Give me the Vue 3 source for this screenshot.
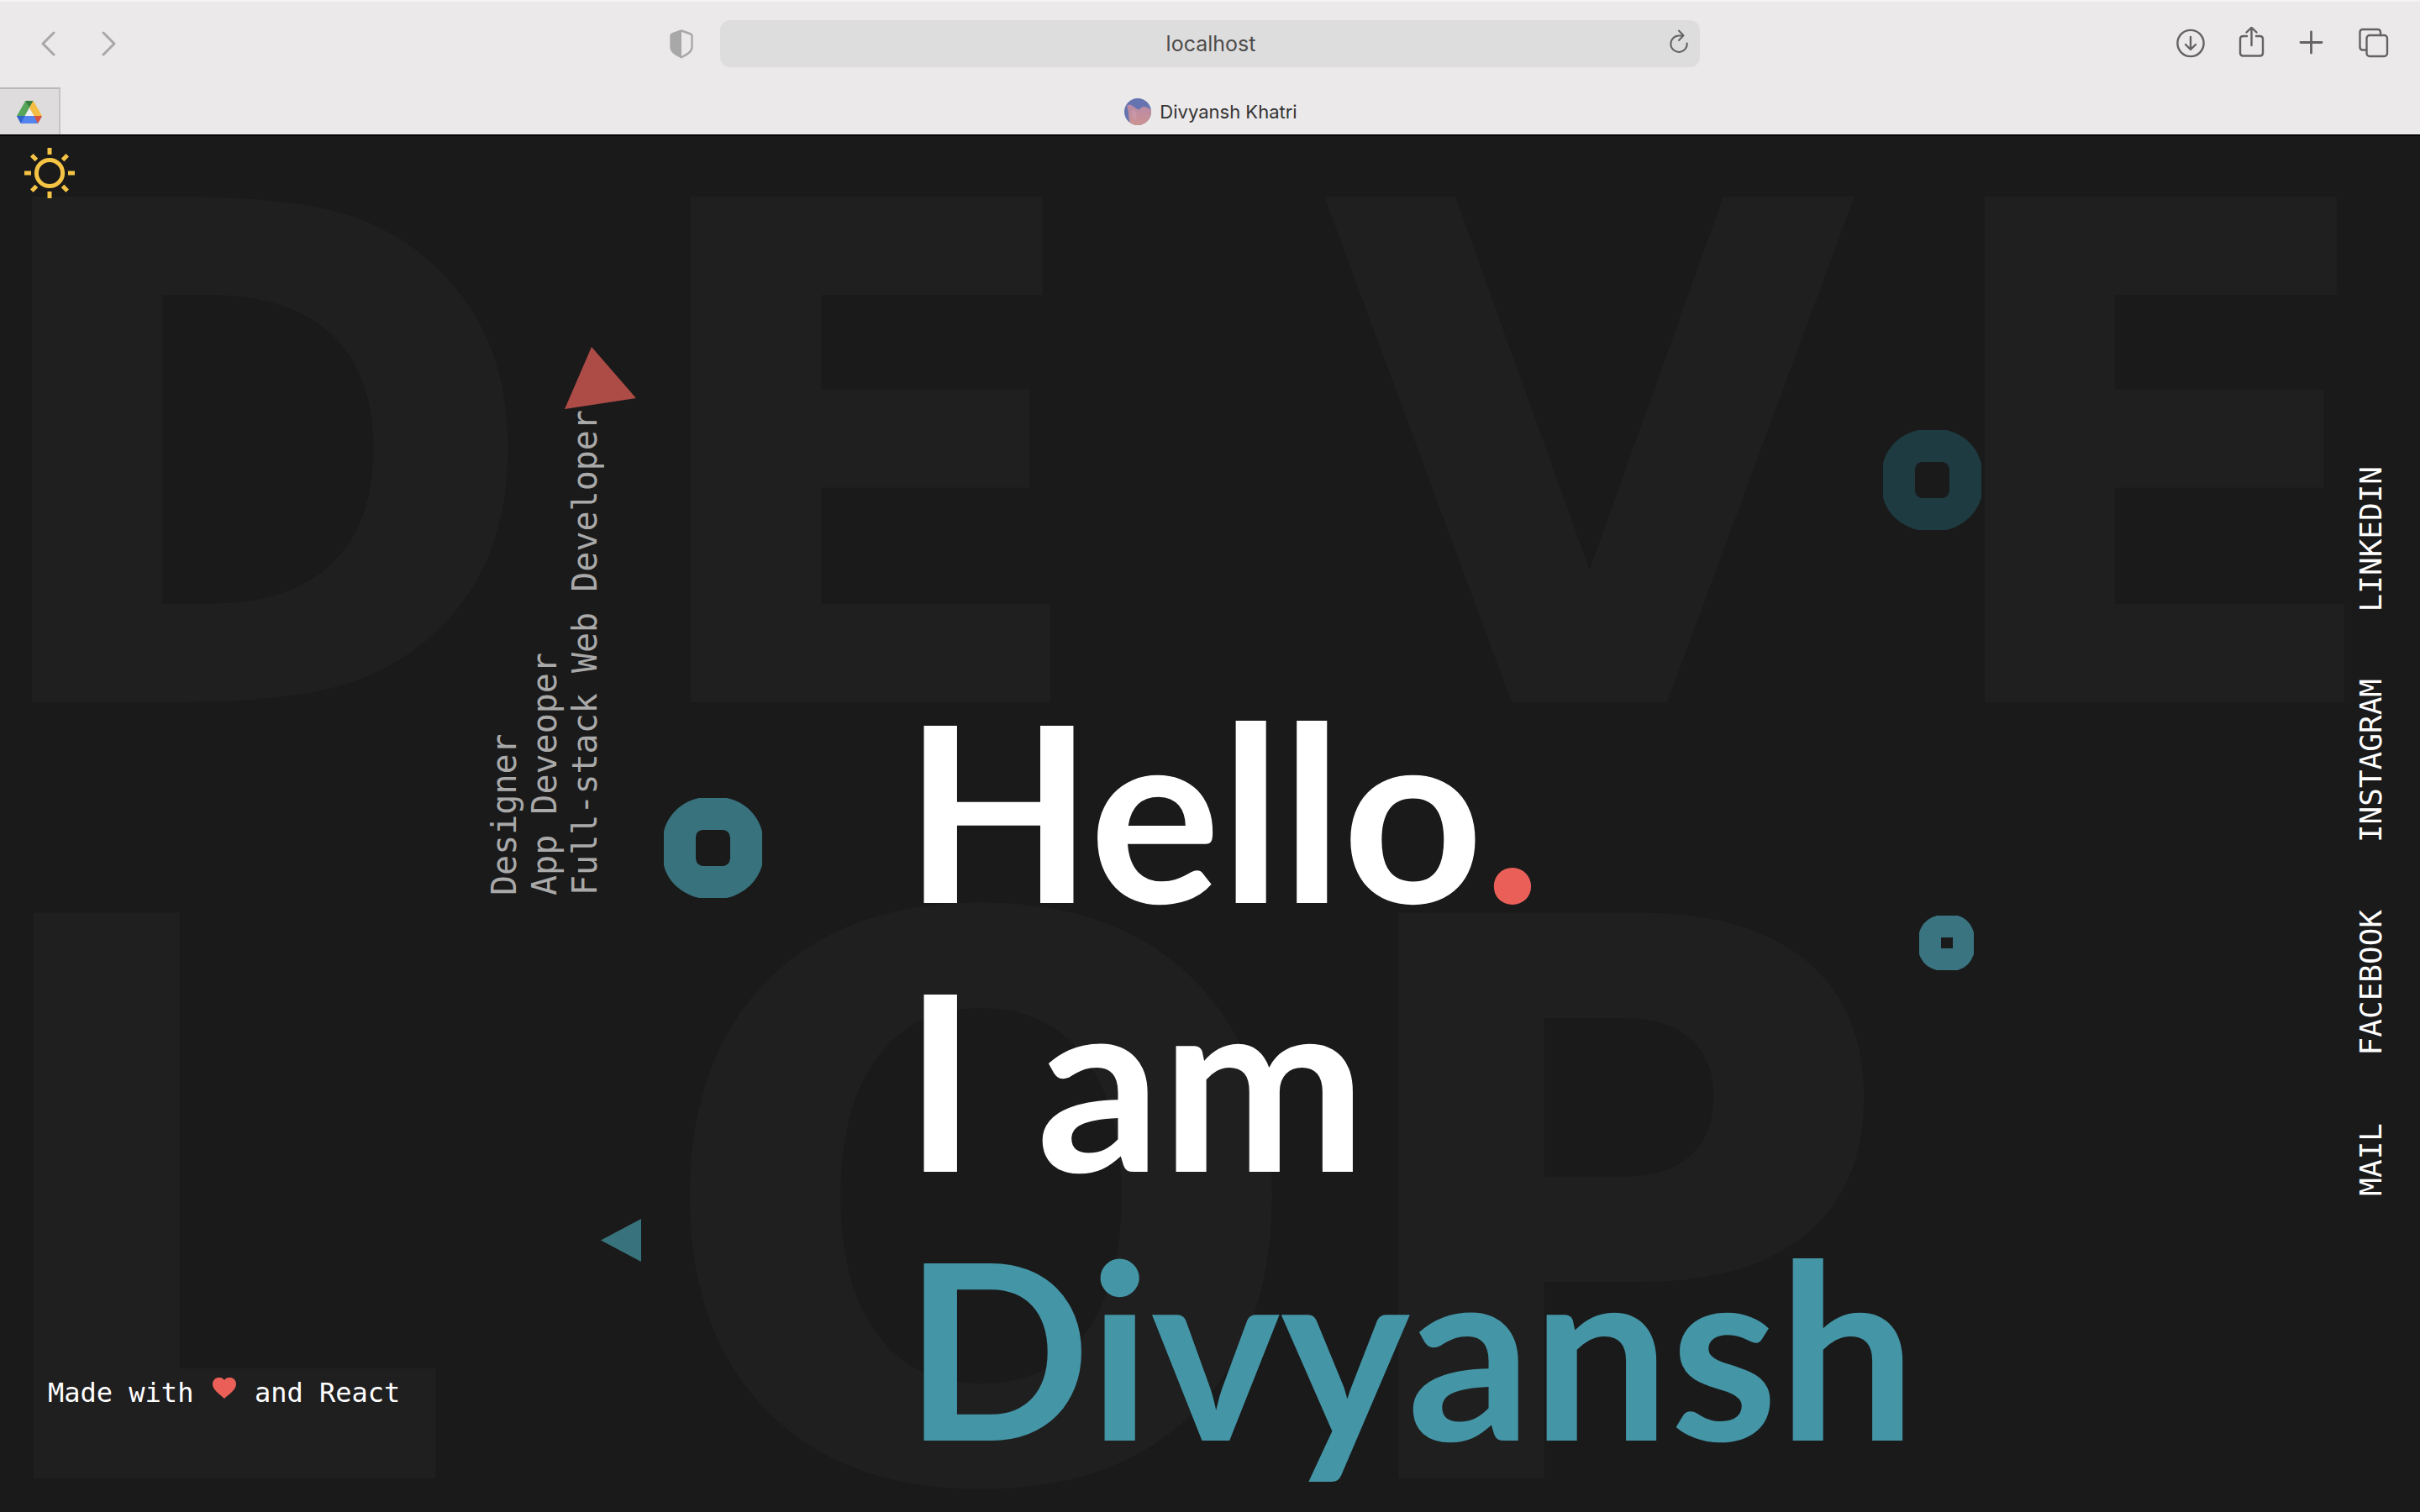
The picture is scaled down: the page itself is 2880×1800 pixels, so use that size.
<script setup>
import { ref } from 'vue'

const address = ref('localhost')
const backdrop = [
  { name: 'top', letters: ['D', 'E', 'V', 'E'] },
  { name: 'bottom', letters: ['L', 'O', 'P'] },
]
const roles = ['Designer', 'App Deveoper', 'Full-stack Web Developer']
const links = ['LINKEDIN', 'INSTAGRAM', 'FACEBOOK', 'MAIL']
const rays = [0, 45, 90, 135, 180, 225, 270, 315]
</script>

<template>
  <div class="window">
    <header class="browser">
      <div class="toolbar">
        <div class="side">
          <button class="tool faint" aria-label="Back">
            <svg viewBox="0 0 40 40"><path d="M28 7 15 20 28 33" stroke-width="3" /></svg>
          </button>
          <button class="tool faint" aria-label="Forward">
            <svg viewBox="0 0 40 40"><path d="M15 7 28 20 15 33" stroke-width="3" /></svg>
          </button>
          <button class="tool faint shield" aria-label="Privacy report">
            <svg viewBox="0 0 40 40">
              <path d="M20 4.500 31 8.500Q32.500 9 32.500 11V24C32.500 30 26 33 20 36.200 14 33 7.500 30 7.500 24V11Q7.500 9 9 8.500Z" stroke-width="2.400" />
              <path d="M20 4.500V36C14 33 7.500 30 7.500 24V10L9 8.500Z" fill="currentColor" stroke="none" />
            </svg>
          </button>
        </div>
        <div class="field">
          <input v-model="address" type="text" aria-label="Address" />
          <button class="tool reload" aria-label="Reload">
            <svg viewBox="0 0 40 40">
              <path d="M28.700 19.500A9.700 9.700 0 1 1 19 10.500H24M19 4.500 24.500 10.300 19 16" stroke-width="2" />
            </svg>
          </button>
        </div>
        <div class="side end">
          <button class="tool" aria-label="Downloads">
            <svg viewBox="0 0 40 40">
              <circle cx="19" cy="19.500" r="15.600" />
              <path d="M19 12V26.500M13 21 19 27 25 21" />
            </svg>
          </button>
          <button class="tool" aria-label="Share">
            <svg viewBox="0 0 40 40">
              <path d="M14 11H9.500Q6 11 6 14.500V31Q6 34.500 9.500 34.500H29.500Q33 34.500 33 31V14.500Q33 11 29.500 11H25M19.500 22V1.500M13.500 6.500 19.500 .8 25.500 6.500" />
            </svg>
          </button>
          <button class="tool" aria-label="New tab">
            <svg viewBox="0 0 40 40"><path d="M6 18.500H31M18.500 6V31" stroke-width="2.800" /></svg>
          </button>
          <button class="tool" aria-label="Tab overview">
            <svg viewBox="0 0 40 40">
              <rect x="12.500" y="10" width="24.500" height="25" rx="3.500" />
              <path d="M12 27.500H8Q4.500 27.500 4.500 24V6.500Q4.500 3 8 3H25.500Q29 3 29 6.500V10" />
            </svg>
          </button>
        </div>
      </div>
      <div class="tabs">
        <button class="pinned" aria-label="Google Drive">
          <svg viewBox="0 0 30 27">
            <path d="M10.300 0H19.300L4.800 27 0 18Z" fill="#57a55a" />
            <path d="M10.300 0H19.700L15 8Z" fill="#397d3d" />
            <path d="M19.700 0 30 18H20.500L15 8Z" fill="#f2bd42" />
            <path d="M0 18H30L25 27H5Z" fill="#5383ec" />
            <path d="M0 18H9.500L4.800 27Z" fill="#3263cd" />
            <path d="M20.500 18H30L25 27Z" fill="#d9503f" />
            <path d="M15 9 20.300 18H9.700Z" fill="#f0f0f0" />
          </svg>
        </button>
        <div class="active">
          <svg viewBox="0 0 32 32">
            <defs>
              <clipPath id="disc"><circle cx="16" cy="16" r="16" /></clipPath>
              <linearGradient id="cloud" x1="0" y1="0" x2="0" y2="1">
                <stop offset="0" stop-color="#b88aa8" />
                <stop offset="1" stop-color="#cc9391" />
              </linearGradient>
            </defs>
            <g clip-path="url(#disc)">
              <rect width="32" height="32" fill="#6574b0" />
              <path d="M3 9Q6 6 10 9L14 12Q18 15 20 11Q25 8 32 14V32H7Q5 22 5 16Z" fill="url(#cloud)" />
              <path d="M9 14Q13 12 15 20L13 27Q8 22 9 14Z" fill="#cf9dae" opacity="0.6" />
            </g>
          </svg>
          <span>Divyansh Khatri</span>
        </div>
      </div>
    </header>

    <main class="page">
      <div class="backdrop" aria-hidden="true">
        <div v-for="row in backdrop" :key="row.name" :class="['row', row.name]">
          <span v-for="(letter, i) in row.letters" :key="i">{{ letter }}</span>
        </div>
      </div>

      <div class="shapes" aria-hidden="true">
        <svg class="shape red-triangle" viewBox="0 0 85 74"><path d="M32 0 85 61 0 74Z" fill="#ad4b47" /></svg>
        <svg class="shape ring ring-left" viewBox="0 0 117 119"><path fill-rule="evenodd" d="M42 0H75C97 4 113 22 117 40V80C112 98 97 114 75 119H42C20 114 4 98 0 80V40C4 22 20 4 42 0ZM46 38Q38 39 38 47V72Q39 80 46 81H71Q78 80 79 72V47Q78 39 71 38Z" /></svg>
        <svg class="shape ring ring-right" viewBox="0 0 117 119"><path fill-rule="evenodd" d="M42 0H75C97 4 113 22 117 40V80C112 98 97 114 75 119H42C20 114 4 98 0 80V40C4 22 20 4 42 0ZM46 38Q38 39 38 47V72Q39 80 46 81H71Q78 80 79 72V47Q78 39 71 38Z" /></svg>
        <svg class="shape ring ring-small" viewBox="0 0 65 65"><path fill-rule="evenodd" d="M21 0H46Q60 4 65 20V46Q60 61 46 65H21Q5 61 0 46V20Q5 4 21 0ZM26 26V39H40V26Z" /></svg>
        <svg class="shape teal-triangle" viewBox="0 0 48 51"><path d="M0 25.500 48 0V51Z" fill="#38727d" /></svg>
      </div>

      <div class="left">
        <button class="theme" aria-label="Toggle theme">
          <svg viewBox="0 0 60 60">
            <circle cx="30" cy="30" r="15.600" />
            <path v-for="angle in rays" :key="angle" d="M30 0V8" :transform="`rotate(${angle} 30 30)`" />
          </svg>
        </button>
        <p class="credit">
          Made with
          <svg viewBox="0 0 28 25" role="img" aria-label="love"><path d="M14 25C9 20 0 15 0 7.500 0 0 10-3 14 3 18-3 28 0 28 7.500 28 15 19 20 14 25Z" /></svg>
          and React
        </p>
      </div>

      <div class="roles">
        <div v-for="role in roles" :key="role">{{ role }}</div>
      </div>

      <h1 class="greeting">
        <span>Hello<span class="dot">.</span></span>
        <span>I am</span>
        <span class="name">Divyansh</span>
      </h1>

      <nav class="social" aria-label="Contact">
        <a v-for="link in links" :key="link" href="#">{{ link }}</a>
      </nav>
    </main>
  </div>
</template>

<style>
body {
  margin: 0;
  background: #1a1a1a;
}
</style>

<style scoped>
* {
  box-sizing: border-box;
}
.window {
  display: flex;
  flex-direction: column;
  min-height: 100vh;
}
svg {
  display: block;
}
button {
  padding: 0;
  border: 0;
  background: none;
  cursor: pointer;
}
.browser {
  height: 162px;
  border-top: 2px solid #f5f3f4;
  border-bottom: 2px solid #050505;
  background: #ebe9ea;
  font-family: Inter, Roboto, sans-serif;
}
.toolbar {
  display: grid;
  grid-template-columns: 1fr minmax(0, 1166px) 1fr;
  align-items: center;
  height: 102px;
  padding: 0 36px 2px;
}
.side {
  display: flex;
  align-items: center;
  gap: 32px;
}
.side.end {
  justify-content: flex-end;
}
.tool {
  width: 40px;
  height: 40px;
  color: #646263;
}
.tool.faint {
  color: #a9a8a8;
}
.tool svg {
  width: 40px;
  height: 40px;
  fill: none;
  stroke: currentColor;
  stroke-width: 2.4;
  stroke-linecap: round;
  stroke-linejoin: round;
}
.shield {
  margin-left: auto;
  margin-right: 26px;
}
.field {
  display: flex;
  align-items: center;
  height: 56px;
  padding: 0 4px 0 46px;
  border-radius: 12px;
  background: #dedddd;
}
.field input {
  flex: 1;
  min-width: 0;
  height: 56px;
  padding: 0;
  border: 0;
  outline: 0;
  background: none;
  color: #4d4c4c;
  font: 25px Inter, Roboto, sans-serif;
  text-align: center;
}
.tabs {
  display: flex;
  height: 56px;
}
.pinned {
  display: grid;
  place-items: center;
  width: 72px;
  border-top: 2px solid #bab9b9;
  border-right: 2px solid #c6c4c5;
  background: #dedcdd;
}
.pinned svg {
  width: 30px;
  height: 27px;
}
.active {
  display: flex;
  flex: 1;
  align-items: center;
  justify-content: center;
  gap: 10px;
  padding: 2px 70px 0 0;
  color: #333;
  font-size: 22px;
}
.active svg {
  width: 32px;
  height: 32px;
}
.page {
  position: relative;
  display: flex;
  flex: 1;
  align-items: flex-start;
  overflow: hidden;
  background: #1a1a1a;
  color: #fff;
  font-family: "DejaVu Sans Mono", monospace;
}
.backdrop {
  position: absolute;
  top: 68px;
  left: 0;
  right: 0;
  color: #1f1f1f;
  font-family: "DejaVu Sans", sans-serif;
  font-weight: 700;
  user-select: none;
}
.row {
  display: grid;
}
.top {
  grid-template-columns: 784fr 751fr 789fr 594fr;
  margin-left: -38px;
  font-size: 826px;
  line-height: 640px;
}
.bottom {
  grid-template-columns: 801fr 823fr 1301fr;
  margin-top: 210px;
  margin-left: -45px;
  font-size: 924px;
  line-height: 720px;
}
.top span:nth-child(3),
.bottom span:nth-child(2) {
  justify-self: center;
}
.shape {
  position: absolute;
}
.ring {
  width: 117px;
  height: 119px;
  fill: #38727d;
}
.red-triangle {
  top: 251px;
  left: 672px;
  width: 85px;
  height: 74px;
}
.ring-left {
  top: 788px;
  left: 790px;
}
.ring-right {
  top: 350px;
  right: 522px;
  fill: #1e3b41;
}
.ring-small {
  top: 928px;
  right: 531px;
  width: 65px;
  height: 65px;
  fill: #3a7480;
}
.teal-triangle {
  top: 1289px;
  left: 715px;
  width: 48px;
  height: 51px;
}
.left,
.roles,
.greeting,
.social {
  position: relative;
}
.left {
  display: flex;
  flex-direction: column;
  align-items: flex-start;
  align-self: stretch;
  justify-content: space-between;
  width: 20%;
  padding: 14px 0 118px 29px;
}
.theme,
.theme svg {
  width: 60px;
  height: 60px;
}
.theme svg {
  fill: none;
  stroke: #f5c445;
  stroke-width: 5;
}
.credit {
  margin: 0 0 0 28px;
  font-size: 32px;
  line-height: 48px;
  white-space: nowrap;
}
.credit svg {
  display: inline-block;
  width: 28px;
  height: 25px;
  margin: 0 3px;
  vertical-align: 4px;
  fill: #eb5f59;
}
.roles {
  margin-top: 326px;
  color: #a9a9a9;
  font-size: 40px;
  line-height: 48px;
  white-space: nowrap;
  writing-mode: vertical-rl;
  transform: rotate(180deg);
}
.greeting {
  flex: 1;
  display: flex;
  flex-direction: column;
  margin: 640px 0 0 356px;
  font-family: Lato, sans-serif;
  font-size: 292px;
  font-weight: 700;
  line-height: 320px;
  white-space: nowrap;
}
.dot {
  color: #eb5f59;
}
.name {
  color: #4495a6;
}
.social {
  display: flex;
  flex-direction: column;
  gap: 80px;
  margin: 393px 34px 0 0;
  font-size: 36px;
  line-height: 48px;
}
.social a {
  color: #fff;
  text-decoration: none;
  writing-mode: vertical-rl;
  transform: rotate(180deg);
}
</style>
